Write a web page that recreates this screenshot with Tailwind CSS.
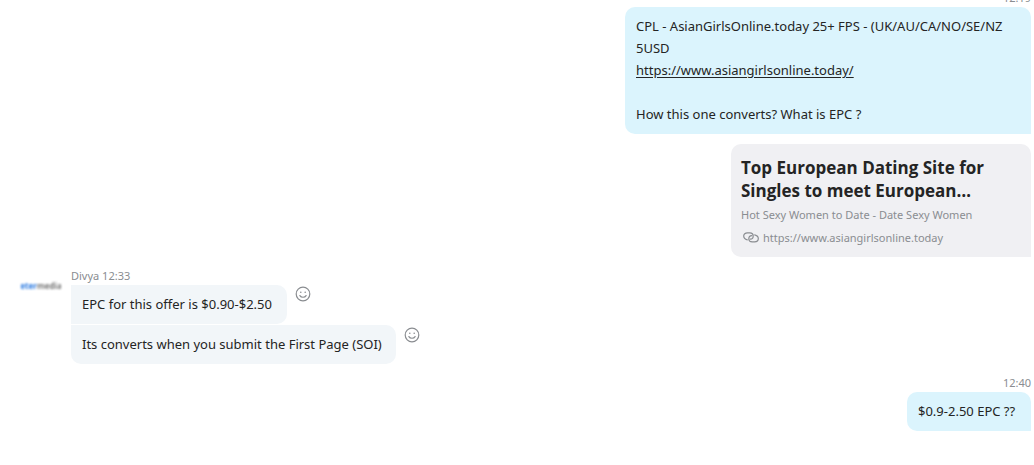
<!DOCTYPE html>
<html lang="en">
<head>
<meta charset="utf-8">
<meta name="viewport" content="width=device-width, initial-scale=1">
<title>Chat</title>
<script src="https://cdn.jsdelivr.net/npm/@tailwindcss/browser@4"></script>
</head>
<body class="overflow-x-hidden bg-white font-['Segoe_UI','Noto_Sans',sans-serif] text-[13px] leading-[22px] text-[#242424]">
<main class="flex flex-col overflow-hidden pr-[3px]">
  <section class="-mt-[11px] flex flex-col items-end">
    <time class="text-[11px] leading-[18px] text-[#8a8d91]">12:19</time>
    <div class="min-w-[406px] rounded-[10px] rounded-br-none bg-[#dbf4fd] px-[11px] pt-2 pb-[9px]">
      <p class="pr-px">CPL - AsianGirlsOnline.today 25+ FPS - (UK/AU/CA/NO/SE/NZ<br>5USD<br><a href="https://www.asiangirlsonline.today/" class="underline underline-offset-2">https://www.asiangirlsonline.today/</a></p>
      <p class="mt-[22px]">How this one converts? What is EPC ?</p>
    </div>
    <article class="mt-[10px] w-[300px] rounded-[10px] rounded-br-none bg-[#f0f0f3] px-[10px] pt-3 pb-2">
      <h2 class="font-['Open_Sans',sans-serif] text-[17px] leading-[23px] font-bold">Top European Dating Site for<br>Singles to meet European…</h2>
      <p class="mt-px text-[11px] leading-[23px] text-[#8a8d91]">Hot Sexy Women to Date - Date Sexy Women</p>
      <a href="https://www.asiangirlsonline.today" class="mt-px flex items-center gap-1 pl-[2px] text-[11px] leading-[22px] text-[#8a8d91]">
        <svg class="h-4 w-4" viewBox="0 0 16 16" fill="none" stroke="currentColor" stroke-width="1.2" stroke-linecap="round" aria-hidden="true">
          <path d="M4.300 9.800C2.200 9.300.7 7.900.7 6.100c0-2 1.600-3.300 3.700-3.300h2.400c2 0 3.400 1.300 3.400 3.100 0 1.900-1.300 3.200-3 3.200"/>
          <path d="M11.700 4.900c2.100.5 3.600 1.900 3.600 3.700 0 2-1.600 3.300-3.700 3.300H9.200c-2 0-3.400-1.300-3.400-3.100 0-1.900 1.300-3.200 3-3.200"/>
        </svg>
        <span>https://www.asiangirlsonline.today</span>
      </a>
    </article>
  </section>

  <section class="mt-[10px] flex pl-[21px]">
    <div class="mt-[14px] flex h-[10px] w-10 items-center justify-center overflow-hidden text-[8px] leading-[10px] font-bold text-[#777777] blur-[1px]"><span class="text-[#2878e0]">eter</span>media</div>
    <div class="ml-[10px] flex flex-col items-start">
      <p class="text-[11px] leading-[18px] text-[#8a8d91]">Divya 12:33</p>
      <div class="flex items-start gap-2">
        <p class="min-w-[216px] rounded-r-[10px] bg-[#f2f6f9] px-[11px] pt-2 pb-[9px]">EPC for this offer is $0.90-$2.50</p>
        <button type="button" aria-label="React" class="mt-px text-[#8a8d91]">
          <svg class="h-4 w-4" viewBox="0 0 16 16" fill="none" stroke="currentColor" stroke-width="1.2" stroke-linecap="round"><circle cx="8" cy="8" r="6.800"/><path d="M4.900 9.600c1.300 2.200 4.900 2.200 6.200 0"/><g fill="currentColor" stroke="none"><circle cx="5.800" cy="6.300" r=".8"/><circle cx="10.200" cy="6.300" r=".8"/></g></svg>
        </button>
      </div>
      <div class="mt-px flex items-start gap-2">
        <p class="min-w-[325px] rounded-r-[10px] rounded-bl-[10px] bg-[#f2f6f9] px-[11px] pt-2 pb-[9px]">Its converts when you submit the First Page (SOI)</p>
        <button type="button" aria-label="React" class="mt-[2px] text-[#8a8d91]">
          <svg class="h-4 w-4" viewBox="0 0 16 16" fill="none" stroke="currentColor" stroke-width="1.2" stroke-linecap="round"><circle cx="8" cy="8" r="6.800"/><path d="M4.900 9.600c1.300 2.200 4.900 2.200 6.200 0"/><g fill="currentColor" stroke="none"><circle cx="5.800" cy="6.300" r=".8"/><circle cx="10.200" cy="6.300" r=".8"/></g></svg>
        </button>
      </div>
    </div>
  </section>

  <section class="mt-[10px] flex flex-col items-end">
    <time class="text-[11px] leading-[18px] text-[#8a8d91]">12:40</time>
    <p class="min-w-[124px] rounded-[10px] rounded-br-none bg-[#dbf4fd] px-[11px] pt-2 pb-[9px]">$0.9-2.50 EPC ??</p>
  </section>
</main>
</body>
</html>
